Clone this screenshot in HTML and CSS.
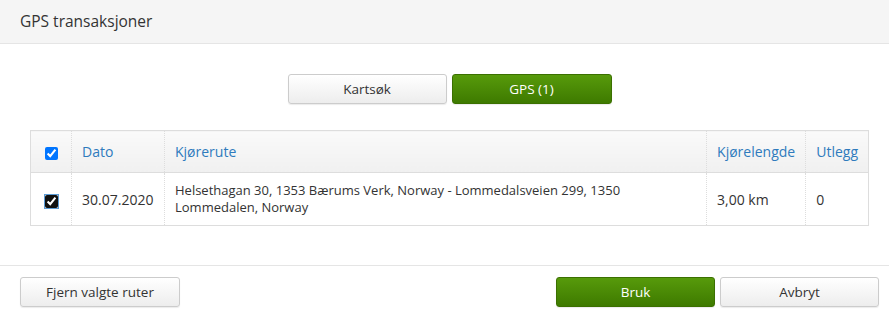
FILE: index.html
```html
<!DOCTYPE html>
<html lang="no">
<head>
  <meta charset="UTF-8">
  <title>GPS transaksjoner</title>
  <link rel="stylesheet" href="styles.css">
</head>
<body>
  <div class="dialog">
    <div class="dialog-header">
      <h3>GPS transaksjoner</h3>
    </div>
    <div class="dialog-body">
      <div class="tabs">
        <button class="btn">Kartsøk</button>
        <button class="btn btn-green">GPS (1)</button>
      </div>
      <table class="grid">
        <thead>
          <tr>
            <th class="col-check"><input type="checkbox" checked></th>
            <th class="col-date">Dato</th>
            <th class="col-route">Kjørerute</th>
            <th class="col-dist">Kjørelengde</th>
            <th class="col-cost">Utlegg</th>
          </tr>
        </thead>
        <tbody>
          <tr>
            <td class="col-check"><input type="checkbox" class="focused" checked></td>
            <td>30.07.2020</td>
            <td class="route">Helsethagan 30, 1353 Bærums Verk, Norway - Lommedalsveien 299, 1350 Lommedalen, Norway</td>
            <td>3,00 km</td>
            <td>0</td>
          </tr>
        </tbody>
      </table>
    </div>
    <div class="dialog-footer">
      <button class="btn btn-wide">Fjern valgte ruter</button>
      <div class="footer-right">
        <button class="btn btn-green">Bruk</button>
        <button class="btn">Avbryt</button>
      </div>
    </div>
  </div>
</body>
</html>
```

FILE: styles.css
```css
*{
  margin: 0;
  padding: 0;
  box-sizing: border-box;
}
body{
  font-family: "Open Sans", "Liberation Sans", sans-serif;
  font-size: 13px;
  color: #333;
  background: #fff;
}
.dialog-header{
  height: 44px;
  background: #f5f5f5;
  border-bottom: 1px solid #e5e5e5;
  padding: 0 20px;
  display: flex;
  align-items: center;
}
.dialog-header h3{
  font-size: 15.5px;
  font-weight: normal;
  color: #333;
  margin-top: -2px;
}
.dialog-body{
  padding: 30px 20px 39px 30px;
  border-bottom: 1px solid #e5e5e5;
}
.tabs{
  display: flex;
  justify-content: center;
  gap: 5px;
  margin-bottom: 26px;
}
.btn{
  font-family: inherit;
  font-size: 13.5px;
  height: 30px;
  width: 159px;
  color: #333;
  background: linear-gradient(#fff, #ededed);
  border: 1px solid #ccc;
  border-radius: 3px;
  box-shadow: 0 1px 1px rgba(0,0,0,.08);
  cursor: pointer;
}
.btn-green{
  color: #fff;
  background: linear-gradient(#579a0b, #3e7a00);
  border-color: #3b7000;
}
.tabs .btn-green{
  width: 160px;
}
.grid{
  width: 100%;
  border-collapse: collapse;
  border: 1px solid #ddd;
}
.grid th{
  height: 42px;
  font-size: 14px;
  font-weight: normal;
  color: #2f7bbd;
  text-align: left;
  padding: 0 10px;
  background: linear-gradient(#fafafa, #f0f0f0);
  border-bottom: 1px solid #ddd;
  border-left: 1px dotted #ddd;
}
.grid td{
  height: 53px;
  padding: 8px 10px;
  font-size: 14px;
  vertical-align: middle;
  border-left: 1px dotted #ddd;
  line-height: 17px;
}
.grid td.route{
  font-size: 13px;
  vertical-align: top;
  padding-top: 9px;
}
.grid .col-check{
  width: 41px;
  text-align: center;
  border-left: none;
  padding: 0;
}
.col-date{
  width: 93px;
}
.col-dist{
  width: 99px;
}
.col-cost{
  width: 62px;
}
.grid input{
  width: 13px;
  height: 13px;
  vertical-align: middle;
  accent-color: #0075ff;
  margin-top: 1px;
}
.grid input.focused{
  accent-color: #111;
  outline: 1px solid #5b9bd5;
  outline-offset: 0;
  border-radius: 3px;
}
.dialog-footer{
  display: flex;
  justify-content: space-between;
  padding: 11px 10px 10px 20px;
}
.footer-right{
  display: flex;
  gap: 5px;
}
.btn-wide{
  width: 160px;
}
```
